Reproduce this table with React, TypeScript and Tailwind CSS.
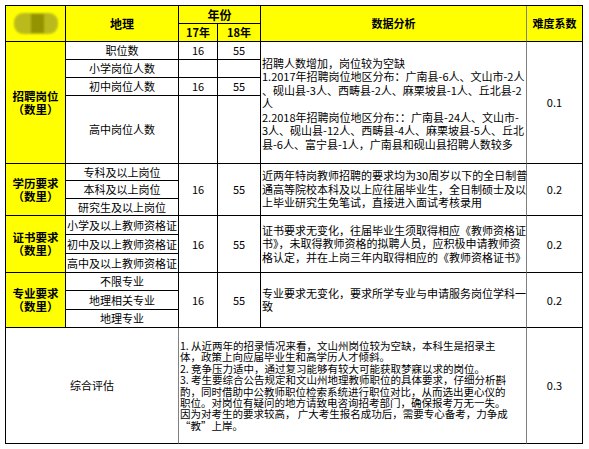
import React from "react";

const base = "border-r border-b border-black flex items-center justify-center";

export default function App() {
  return (
    <div className="w-[589px] h-[449px] bg-white pl-[5px] pt-[5px] font-['Noto_Sans_CJK_SC',sans-serif] text-[11px] text-black">
      <div className="grid w-max border-l border-t border-black grid-cols-[60px_113px_39px_43px_266px_56px] grid-rows-[18px_18px_18px_18px_18px_68px_17px_18px_17px_19px_19px_19px_18px_19px_18px_116px]">
        {/* header */}
        <div className={`${base} col-start-1 row-start-1 row-span-2 bg-[#ffff00]`}>
          <div className="w-[44px] h-[21px] rounded-[9px] bg-[#baba1c] blur-[1px] flex items-center justify-center">
            <div className="w-[13px] h-[19px] bg-[#939300] ml-[4px]" />
          </div>
        </div>
        <div className={`${base} col-start-2 row-start-1 row-span-2 bg-[#ffff00] font-bold text-[12px]`}>地理</div>
        <div className={`${base} col-start-3 col-span-2 row-start-1 bg-[#ffff00] font-bold text-[12px]`}>年份</div>
        <div className={`${base} col-start-3 row-start-2 bg-[#ffff00] font-bold`}>17年</div>
        <div className={`${base} col-start-4 row-start-2 bg-[#ffff00] font-bold`}>18年</div>
        <div className={`${base} col-start-5 row-start-1 row-span-2 bg-[#ffff00] font-bold border-r-[#808080]`}>数据分析</div>
        <div className={`${base} col-start-6 row-start-1 row-span-2 bg-[#ffff00] font-bold`}>难度系数</div>

        {/* section 1 */}
        <div className={`${base} col-start-1 row-start-3 row-span-4 bg-[#ffff00] font-bold text-[11.5px] leading-[13px] flex-col`}>
          <div>招聘岗位</div>
          <div>（数里）</div>
        </div>
        <div className={`${base} col-start-2 row-start-3`}>职位数</div>
        <div className={`${base} col-start-3 row-start-3`}>16</div>
        <div className={`${base} col-start-4 row-start-3`}>55</div>
        <div className={`${base} col-start-2 row-start-4`}>小学岗位人数</div>
        <div className={`${base} col-start-3 row-start-4`}></div>
        <div className={`${base} col-start-4 row-start-4`}></div>
        <div className={`${base} col-start-2 row-start-5`}>初中岗位人数</div>
        <div className={`${base} col-start-3 row-start-5`}>16</div>
        <div className={`${base} col-start-4 row-start-5`}>55</div>
        <div className={`${base} col-start-2 row-start-6`}>高中岗位人数</div>
        <div className={`${base} col-start-3 row-start-6`}></div>
        <div className={`${base} col-start-4 row-start-6`}></div>
        <div className={`${base} col-start-5 row-start-3 row-span-4 justify-start pl-[1px] pt-[3px] border-r-[#808080]`}>
          <div className="leading-[13.4px] whitespace-nowrap">
            <div>招聘人数增加，岗位较为空缺</div>
            <div>1.2017年招聘岗位地区分布：广南县-6人、文山市-2人</div>
            <div>、砚山县-3人、西畴县-2人、麻栗坡县-1人、丘北县-2</div>
            <div>人</div>
            <div>2.2018年招聘岗位地区分布：：广南县-24人、文山市-</div>
            <div>3人、砚山县-12人、西畴县-4人、麻栗坡县-5人、丘北</div>
            <div>县-6人、富宁县-1人，广南县和砚山县招聘人数较多</div>
          </div>
        </div>
        <div className={`${base} col-start-6 row-start-3 row-span-4`}>0.1</div>

        {/* section 2 */}
        <div className={`${base} col-start-1 row-start-7 row-span-3 bg-[#ffff00] font-bold text-[11.5px] leading-[13px] flex-col`}>
          <div>学历要求</div>
          <div>（数里）</div>
        </div>
        <div className={`${base} col-start-2 row-start-7`}>专科及以上岗位</div>
        <div className={`${base} col-start-2 row-start-8`}>本科及以上岗位</div>
        <div className={`${base} col-start-2 row-start-9`}>研究生及以上岗位</div>
        <div className={`${base} col-start-3 row-start-7 row-span-3`}>16</div>
        <div className={`${base} col-start-4 row-start-7 row-span-3`}>55</div>
        <div className={`${base} col-start-5 row-start-7 row-span-3 justify-start pl-[1px] border-r-[#808080]`}>
          <div className="leading-[13.4px] whitespace-nowrap">
            <div>近两年特岗教师招聘的要求均为30周岁以下的全日制普</div>
            <div>通高等院校本科及以上应往届毕业生，全日制硕士及以</div>
            <div>上毕业研究生免笔试，直接进入面试考核录用</div>
          </div>
        </div>
        <div className={`${base} col-start-6 row-start-7 row-span-3`}>0.2</div>

        {/* section 3 */}
        <div className={`${base} col-start-1 row-start-10 row-span-3 bg-[#ffff00] font-bold text-[11.5px] leading-[13px] flex-col`}>
          <div>证书要求</div>
          <div>（数里）</div>
        </div>
        <div className={`${base} col-start-2 row-start-10`}>小学及以上教师资格证</div>
        <div className={`${base} col-start-2 row-start-11`}>初中及以上教师资格证</div>
        <div className={`${base} col-start-2 row-start-12`}>高中及以上教师资格证</div>
        <div className={`${base} col-start-3 row-start-10 row-span-3`}>16</div>
        <div className={`${base} col-start-4 row-start-10 row-span-3`}>55</div>
        <div className={`${base} col-start-5 row-start-10 row-span-3 justify-start pl-[1px] border-r-[#808080]`}>
          <div className="leading-[13.4px] whitespace-nowrap">
            <div>证书要求无变化，往届毕业生须取得相应《教师资格证</div>
            <div>书》，未取得教师资格的拟聘人员，应积极申请教师资</div>
            <div>格认定，并在上岗三年内取得相应的《教师资格证书》</div>
          </div>
        </div>
        <div className={`${base} col-start-6 row-start-10 row-span-3`}>0.2</div>

        {/* section 4 */}
        <div className={`${base} col-start-1 row-start-13 row-span-3 bg-[#ffff00] font-bold text-[11.5px] leading-[13px] flex-col`}>
          <div>专业要求</div>
          <div>（数里）</div>
        </div>
        <div className={`${base} col-start-2 row-start-13`}>不限专业</div>
        <div className={`${base} col-start-2 row-start-14`}>地理相关专业</div>
        <div className={`${base} col-start-2 row-start-15`}>地理专业</div>
        <div className={`${base} col-start-3 row-start-13 row-span-3`}>16</div>
        <div className={`${base} col-start-4 row-start-13 row-span-3`}>55</div>
        <div className={`${base} col-start-5 row-start-13 row-span-3 justify-start pl-[1px] border-r-[#808080]`}>
          <div className="leading-[13.4px] whitespace-nowrap">
            <div>专业要求无变化，要求所学专业与申请服务岗位学科一</div>
            <div>致</div>
          </div>
        </div>
        <div className={`${base} col-start-6 row-start-13 row-span-3`}>0.2</div>

        {/* section 5 */}
        <div className={`${base} col-start-1 col-span-2 row-start-16 border-r-[#808080]`}>综合评估</div>
        <div className={`${base} col-start-3 col-span-3 row-start-16 justify-start pl-[1px] border-r-[#808080]`}>
          <div className="text-[10.5px] leading-[11.4px] whitespace-nowrap">
            <div>1. 从近两年的招录情况来看，文山州岗位较为空缺，本科生是招录主</div>
            <div>体，政策上向应届毕业生和高学历人才倾斜。</div>
            <div>2. 竞争压力适中，通过复习能够有较大可能获取梦寐以求的岗位。</div>
            <div>3. 考生要综合公告规定和文山州地理教师职位的具体要求，仔细分析斟</div>
            <div>酌，同时借助中公教师职位检索系统进行职位对比，从而选出更心仪的</div>
            <div>职位。对岗位有疑问的地方请致电咨询招考部门，确保报考万无一失。</div>
            <div>因为对考生的要求较高， 广大考生报名成功后，需要专心备考，力争成</div>
            <div>“教”上岸。</div>
          </div>
        </div>
        <div className={`${base} col-start-6 row-start-16`}>0.3</div>
      </div>
    </div>
  );
}
